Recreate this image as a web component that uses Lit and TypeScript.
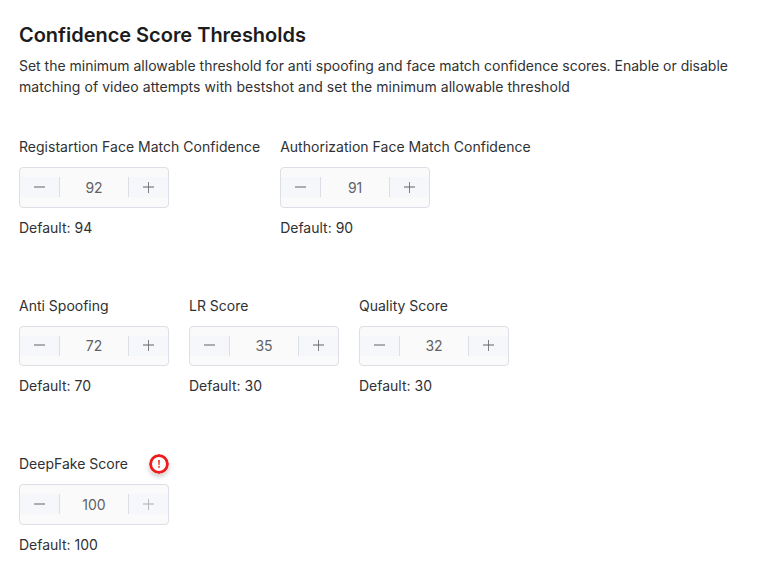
import { LitElement, html, css, nothing } from "lit";
import { customElement, property } from "lit/decorators.js";

@customElement("number-stepper")
class NumberStepper extends LitElement {
  @property({ type: Number }) value = 0;
  @property({ type: Number }) max = 100;

  static styles = css`
    :host {
      display: block;
    }
    .box {
      box-sizing: border-box;
      width: 150px;
      height: 40.6px;
      border: 1px solid #dcdfe6;
      border-radius: 4px;
      background: #fafafa;
      display: flex;
      align-items: center;
    }
    .btn {
      box-sizing: border-box;
      width: 40px;
      height: 20px;
      background: #f5f7fa;
      color: #606266;
      display: flex;
      align-items: center;
      justify-content: center;
    }
    .dec {
      border-right: 1px solid #dcdfe6;
    }
    .inc {
      border-left: 1px solid #dcdfe6;
    }
    .off {
      color: #a8abb2;
    }
    .value {
      flex: 1;
      text-align: center;
      color: #606266;
      line-height: 20px;
      padding-top: 0.4px;
    }
    svg {
      display: block;
    }
  `;

  render() {
    const full = this.value >= this.max;
    return html`
      <div class="box">
        <div class="btn dec">
          <svg width="11" height="11" viewBox="0 0 11 11">
            <path d="M0 5H11" stroke="currentColor" />
          </svg>
        </div>
        <div class="value">${this.value}</div>
        <div class="btn inc ${full ? "off" : ""}">
          <svg width="11" height="11" viewBox="0 0 11 11">
            <path d="M0 5H11" stroke="currentColor" />
            <path d="M5.5 0V11" stroke="currentColor" stroke-opacity=".8" />
          </svg>
        </div>
      </div>
    `;
  }
}

interface Score {
  label: string;
  value: number;
  fallback: number;
  alert?: boolean;
}

const groups: Score[][] = [
  [
    { label: "Registartion Face Match Confidence", value: 92, fallback: 94 },
    { label: "Authorization Face Match Confidence", value: 91, fallback: 90 },
  ],
  [
    { label: "Anti Spoofing", value: 72, fallback: 70 },
    { label: "LR Score", value: 35, fallback: 30 },
    { label: "Quality Score", value: 32, fallback: 30 },
  ],
  [{ label: "DeepFake Score", value: 100, fallback: 100, alert: true }],
];

@customElement("app-root")
class AppRoot extends LitElement {
  static styles = css`
    :host {
      display: block;
      box-sizing: border-box;
      height: 572px;
      overflow: hidden;
      padding: 20px 19px 0;
      background: #fff;
      color: #303133;
      font: 14px/21px Inter, sans-serif;
    }
    h2 {
      margin: 0 0 5px;
      font-size: 20px;
      line-height: 30px;
      font-weight: 600;
      letter-spacing: -0.02px;
      color: #1c1c1c;
    }
    p {
      margin: 0;
      letter-spacing: -0.01px;
    }
    .loose {
      letter-spacing: 0.05px;
    }
    .groups {
      margin-top: 39.2px;
      display: flex;
      flex-direction: column;
      gap: 56.9px;
    }
    .group {
      display: flex;
      gap: 20px;
    }
    .head {
      display: flex;
      justify-content: space-between;
      align-items: center;
      height: 21px;
      margin-bottom: 9.9px;
    }
    .wide {
      letter-spacing: 0.016px;
    }
    .default {
      margin-top: 9.1px;
    }
    .badge {
      display: block;
      border-radius: 50%;
      box-shadow: 0 3px 5px rgba(0, 0, 0, 0.2);
    }
  `;

  render() {
    return html`
      <h2>Confidence Score Thresholds</h2>
      <p>
        Set the minimum allowable threshold for anti spoofing and face match
        confidence scores. Enable or disable
        <span class="loose"
          >matching of video attempts with bestshot and set the minimum
          allowable threshold</span
        >
      </p>
      <div class="groups">
        ${groups.map(
          (group) => html`
            <div class="group">
              ${group.map(
                (s) => html`
                  <div>
                    <div class="head">
                      <span class=${s.label.length > 20 ? "wide" : ""}>${s.label}</span>
                      ${s.alert
                        ? html`<svg class="badge" width="20" height="20" viewBox="0 0 20 20">
                            <circle cx="10" cy="10" r="8.5" fill="#fff" stroke="#ee1c1c" stroke-width="3" />
                            <path d="M9 6h2l-.3 5.2h-1.4z" fill="#f04a30" />
                            <circle cx="10" cy="13" r="1" fill="#f04a30" />
                          </svg>`
                        : nothing}
                    </div>
                    <number-stepper .value=${s.value}></number-stepper>
                    <div class="default">Default: ${s.fallback}</div>
                  </div>
                `
              )}
            </div>
          `
        )}
      </div>
    `;
  }
}
